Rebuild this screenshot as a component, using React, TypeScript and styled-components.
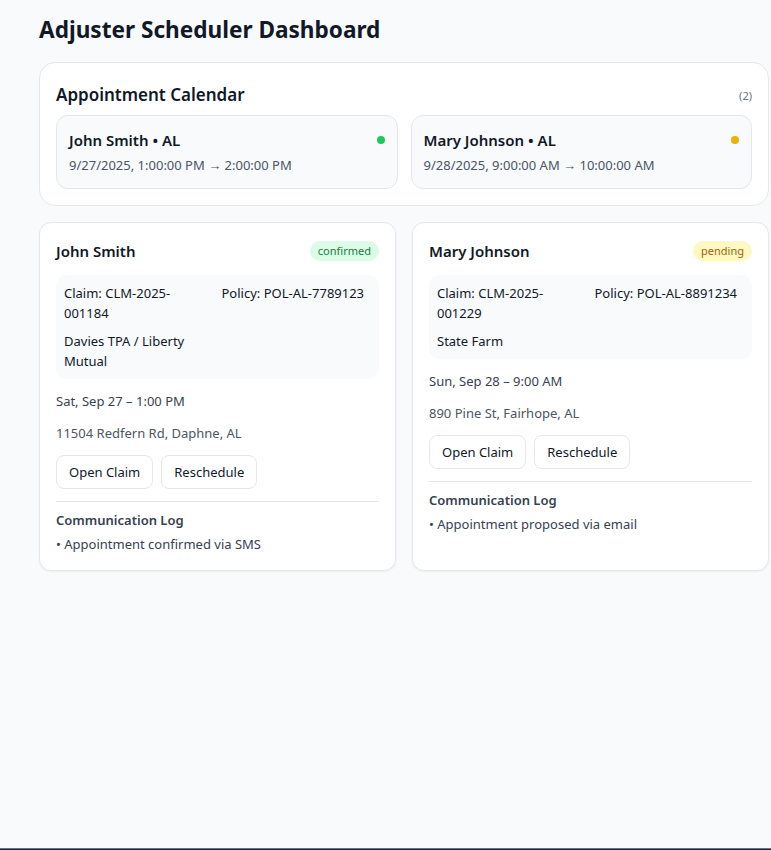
import React from "react";
import styled, { createGlobalStyle } from "styled-components";

const Global = createGlobalStyle`
  html, body { margin: 0; padding: 0; background: #f8fafc; }
  body { font-family: "Noto Sans", "Open Sans", sans-serif; color: #111827; }
  * { box-sizing: border-box; }
`;

const Page = styled.div`
  min-height: 850px;
  padding: 14px 2px 24px 39px;
  background: #f8fafc;
`;

const Title = styled.h1`
  margin: 0 0 16px 0;
  font-size: 22.6px;
  line-height: 32px;
  font-weight: 700;
  color: #111827;
`;

const Panel = styled.section`
  background: #ffffff;
  border: 1px solid #e5e7eb;
  border-radius: 16px;
  padding: 18px 16px 16px 16px;
`;

const PanelHeader = styled.div`
  display: flex;
  align-items: center;
  justify-content: space-between;
  margin-bottom: 6px;
`;

const PanelTitle = styled.h2`
  margin: 0;
  font-size: 17px;
  line-height: 28px;
  font-weight: 600;
  color: #111827;
`;

const Count = styled.span`
  font-size: 11px;
  color: #6b7280;
`;

const CalGrid = styled.div`
  display: grid;
  grid-template-columns: 1fr 1fr;
  gap: 13px;
`;

const Slot = styled.div`
  background: #f8fafc;
  border: 1px solid #e5e7eb;
  border-radius: 12px;
  padding: 13px 12px 13px 12px;
`;

const SlotTop = styled.div`
  display: flex;
  align-items: center;
  justify-content: space-between;
`;

const SlotName = styled.div`
  font-size: 15px;
  line-height: 22px;
  font-weight: 600;
  color: #111827;
`;

const Dot = styled.span<{ $color: string }>`
  width: 8px;
  height: 8px;
  border-radius: 50%;
  background: ${(p) => p.$color};
`;

const SlotTime = styled.div`
  margin-top: 4px;
  font-size: 13px;
  line-height: 20px;
  color: #4b5563;
`;

const Cards = styled.div`
  display: grid;
  grid-template-columns: 1fr 1fr;
  gap: 16px;
  margin-top: 16px;
`;

const Card = styled.article`
  background: #ffffff;
  border: 1px solid #e5e7eb;
  border-radius: 12px;
  padding: 16px;
  box-shadow: 0 1px 2px rgba(0, 0, 0, 0.05);
`;

const CardHead = styled.div`
  display: flex;
  align-items: center;
  justify-content: space-between;
  margin-bottom: 12px;
`;

const CardName = styled.h3`
  margin: 0;
  font-size: 15px;
  line-height: 24px;
  font-weight: 600;
  color: #111827;
`;

const Badge = styled.span<{ $bg: string; $fg: string }>`
  font-size: 11px;
  line-height: 20px;
  padding: 0 8px;
  border-radius: 999px;
  background: ${(p) => p.$bg};
  color: ${(p) => p.$fg};
`;

const Info = styled.div`
  display: grid;
  grid-template-columns: 1fr 1fr;
  gap: 8px;
  background: #f8fafc;
  border-radius: 10px;
  padding: 8px;
  font-size: 13px;
  line-height: 20px;
  color: #111827;
`;

const Line = styled.div<{ $muted?: boolean }>`
  margin-top: 12px;
  font-size: 13px;
  line-height: 20px;
  color: ${(p) => (p.$muted ? "#4b5563" : "#374151")};
`;

const Actions = styled.div`
  display: flex;
  gap: 8px;
  margin-top: 12px;
`;

const Button = styled.button`
  height: 34px;
  padding: 0 12px;
  border: 1px solid #e5e7eb;
  border-radius: 8px;
  background: #ffffff;
  font-family: inherit;
  font-size: 13px;
  color: #111827;
`;

const Log = styled.div`
  margin-top: 12px;
  border-top: 1px solid #e5e7eb;
  padding-top: 8px;
`;

const LogTitle = styled.div`
  font-size: 13px;
  line-height: 20px;
  font-weight: 600;
  color: #374151;
`;

const LogItem = styled.div`
  margin-top: 4px;
  font-size: 13px;
  line-height: 20px;
  color: #374151;
`;

const BottomEdge = styled.div`
  position: fixed;
  left: 0;
  right: 0;
  bottom: 0;
  height: 2px;
  background: #1f2937;
  border-top: 1px solid #64748b;
`;

type Appt = {
  name: string;
  state: string;
  range: string;
  dot: string;
  status: string;
  bg: string;
  fg: string;
  claim: string;
  policy: string;
  carrier: string;
  when: string;
  address: string;
  log: string;
};

const appts: Appt[] = [
  {
    name: "John Smith",
    state: "AL",
    range: "9/27/2025, 1:00:00 PM → 2:00:00 PM",
    dot: "#22c55e",
    status: "confirmed",
    bg: "#dcfce7",
    fg: "#15803d",
    claim: "CLM-2025-001184",
    policy: "POL-AL-7789123",
    carrier: "Davies TPA / Liberty Mutual",
    when: "Sat, Sep 27 – 1:00 PM",
    address: "11504 Redfern Rd, Daphne, AL",
    log: "Appointment confirmed via SMS",
  },
  {
    name: "Mary Johnson",
    state: "AL",
    range: "9/28/2025, 9:00:00 AM → 10:00:00 AM",
    dot: "#eab308",
    status: "pending",
    bg: "#fef9c3",
    fg: "#a16207",
    claim: "CLM-2025-001229",
    policy: "POL-AL-8891234",
    carrier: "State Farm",
    when: "Sun, Sep 28 – 9:00 AM",
    address: "890 Pine St, Fairhope, AL",
    log: "Appointment proposed via email",
  },
];

export default function App() {
  return (
    <Page>
      <Global />
      <Title>Adjuster Scheduler Dashboard</Title>
      <Panel>
        <PanelHeader>
          <PanelTitle>Appointment Calendar</PanelTitle>
          <Count>(2)</Count>
        </PanelHeader>
        <CalGrid>
          {appts.map((a) => (
            <Slot key={a.name}>
              <SlotTop>
                <SlotName>
                  {a.name} • {a.state}
                </SlotName>
                <Dot $color={a.dot} />
              </SlotTop>
              <SlotTime>{a.range}</SlotTime>
            </Slot>
          ))}
        </CalGrid>
      </Panel>
      <Cards>
        {appts.map((a) => (
          <Card key={a.name}>
            <CardHead>
              <CardName>{a.name}</CardName>
              <Badge $bg={a.bg} $fg={a.fg}>
                {a.status}
              </Badge>
            </CardHead>
            <Info>
              <div>Claim: {a.claim}</div>
              <div>Policy: {a.policy}</div>
              <div>{a.carrier}</div>
            </Info>
            <Line>{a.when}</Line>
            <Line $muted>{a.address}</Line>
            <Actions>
              <Button>Open Claim</Button>
              <Button>Reschedule</Button>
            </Actions>
            <Log>
              <LogTitle>Communication Log</LogTitle>
              <LogItem>• {a.log}</LogItem>
            </Log>
          </Card>
        ))}
      </Cards>
      <BottomEdge />
    </Page>
  );
}
